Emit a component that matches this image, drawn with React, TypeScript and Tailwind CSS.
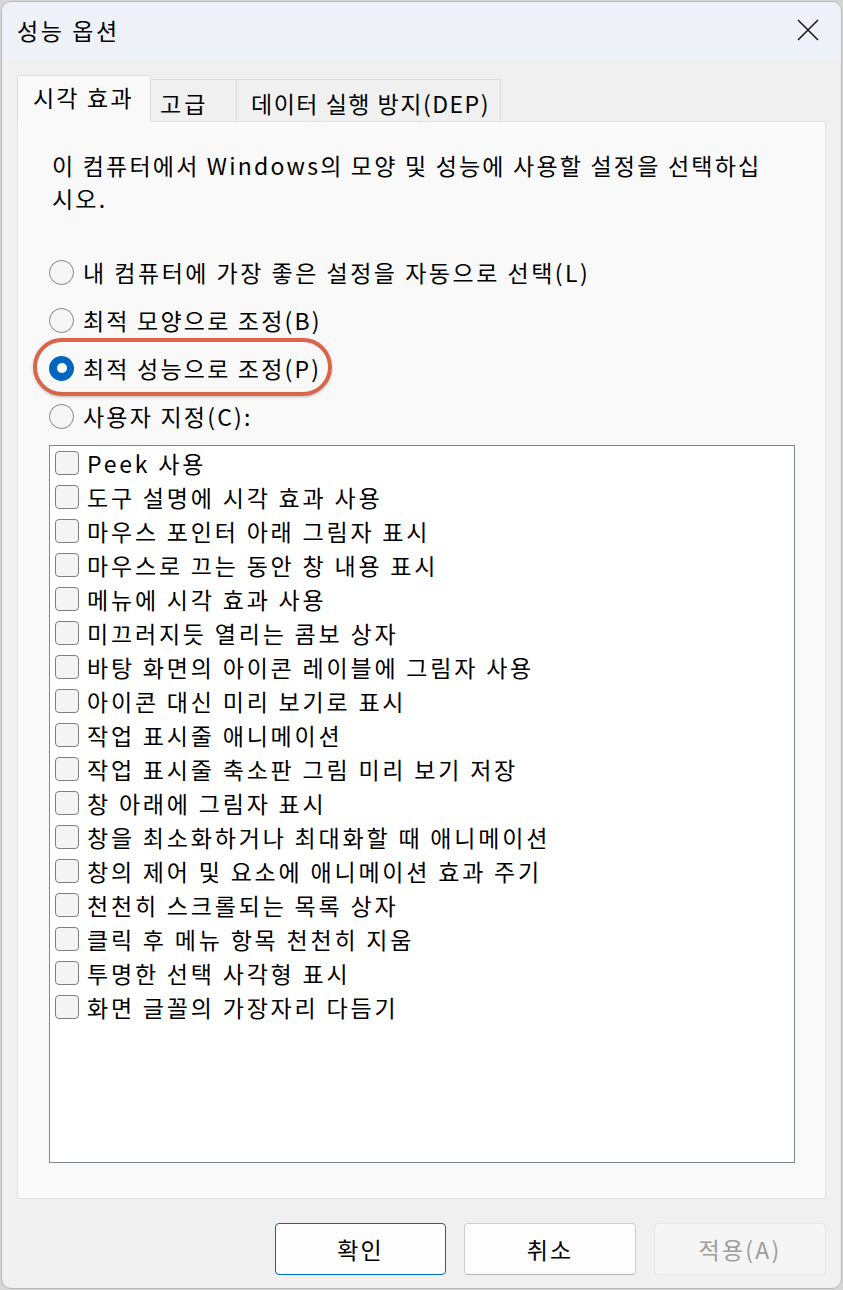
const font = { fontFamily: '"Noto Sans CJK KR", "Noto Sans", sans-serif' };

const effects = [
  'Peek 사용',
  '도구 설명에 시각 효과 사용',
  '마우스 포인터 아래 그림자 표시',
  '마우스로 끄는 동안 창 내용 표시',
  '메뉴에 시각 효과 사용',
  '미끄러지듯 열리는 콤보 상자',
  '바탕 화면의 아이콘 레이블에 그림자 사용',
  '아이콘 대신 미리 보기로 표시',
  '작업 표시줄 애니메이션',
  '작업 표시줄 축소판 그림 미리 보기 저장',
  '창 아래에 그림자 표시',
  '창을 최소화하거나 최대화할 때 애니메이션',
  '창의 제어 및 요소에 애니메이션 효과 주기',
  '천천히 스크롤되는 목록 상자',
  '클릭 후 메뉴 항목 천천히 지움',
  '투명한 선택 사각형 표시',
  '화면 글꼴의 가장자리 다듬기',
];

const radios = [
  '내 컴퓨터에 가장 좋은 설정을 자동으로 선택(L)',
  '최적 모양으로 조정(B)',
  '최적 성능으로 조정(P)',
  '사용자 지정(C):',
];

function Radio({ checked }: { checked: boolean }) {
  if (checked) {
    return (
      <span className="w-[25px] h-[25px] rounded-full bg-[#0067c0] flex items-center justify-center shrink-0">
        <span className="w-[10px] h-[10px] rounded-full bg-white" />
      </span>
    );
  }
  return <span className="w-[25px] h-[25px] rounded-full border-[1.5px] border-[#858585] bg-[#f6f6f6] shrink-0" />;
}

export default function App() {
  const selected = 2;
  return (
    <div className="w-[843px] h-[1290px] bg-[#d6d6d6] pl-[1px] pt-[1px] tracking-[2.2px]" style={font}>
      <div className="w-[841px] h-[1288px] rounded-[10px] border border-[#b8b8b8] bg-[#f0f0f0] overflow-hidden flex flex-col text-black">
        {/* title bar */}
        <div className="h-[56px] bg-[#eef2f8] flex items-center justify-between pl-[15px] pr-[22px]">
          <span className="text-[23px] leading-none tracking-[2.6px]">성능 옵션</span>
          <svg width="22" height="22" viewBox="0 0 22 22" className="text-[#1b1b1b]">
            <path d="M1 1L21 21M21 1L1 21" stroke="currentColor" strokeWidth="1.6" />
          </svg>
        </div>

        <div className="flex-1 px-[15px] pt-[16px] flex flex-col">
          {/* tabs */}
          <div className="flex items-end h-[47px] text-[23px]">
            <div className="relative z-10 -mb-px w-[134px] h-[47px] bg-[#f9f9f9] border border-b-0 border-[#dedede] pl-[15px] pt-[4px]">
              시각 효과
            </div>
            <div className="w-[86px] h-[42px] border border-l-0 border-b-0 border-[#dedede] bg-[#f0f0f0] pl-[9px] pt-[6px] tracking-[3px]">
              고급
            </div>
            <div className="w-[264px] h-[42px] border border-l-0 border-b-0 border-[#dedede] bg-[#f0f0f0] pl-[14px] pt-[6px] tracking-[1.5px]">
              데이터 실행 방지(DEP)
            </div>
          </div>

          {/* panel */}
          <div className="h-[1078px] bg-[#f9f9f9] border border-[#e3e3e3] pl-[31px] pr-[28px] pt-[27px]">
            <p className="pl-[3px] text-[23px] leading-[33px]">
              이 컴퓨터에서 Windows의 모양 및 성능에 사용할 설정을 선택하십
              <br />
              시오.
            </p>

            <div className="mt-[33px] flex flex-col text-[23px]">
              {radios.map((r, i) => (
                <div key={r} className="relative h-[48px] flex items-center gap-[9px]">
                  {i === selected && (
                    <span className="absolute left-[-16px] top-[-6px] w-[299px] h-[58px] rounded-full border-[4px] border-[#d8644a] shadow-[0_1px_3px_rgba(0,0,0,0.25)]" />
                  )}
                  <Radio checked={i === selected} />
                  <span className={i === 0 ? 'tracking-[2.5px]' : ''}>{r}</span>
                </div>
              ))}
            </div>

            <div className="mt-[5px] h-[718px] w-[746px] border border-[#838790] bg-white text-[23px] tracking-[2.8px]">
              {effects.map((e) => (
                <div key={e} className="h-[34px] flex items-center pl-[5px] gap-[8px]">
                  <span className="w-[24px] h-[24px] rounded-[4px] border border-[#7f7f7f] bg-[#f4f4f4] shrink-0" />
                  <span>{e}</span>
                </div>
              ))}
            </div>
          </div>

          {/* buttons */}
          <div className="mt-[24px] flex justify-end gap-[18px] text-[23px]">
            <button className="w-[171px] h-[52px] rounded-[4px] border border-[#0067c0] bg-[#fdfdfd]">확인</button>
            <button className="w-[172px] h-[52px] rounded-[4px] border border-[#d0d0d0] border-b-[#b5b5b5] bg-[#fdfdfd]">취소</button>
            <button className="w-[172px] h-[52px] rounded-[4px] border border-[#e6e6e6] bg-[#f5f5f5] text-[#9d9d9d]">적용(A)</button>
          </div>
        </div>
      </div>
    </div>
  );
}
